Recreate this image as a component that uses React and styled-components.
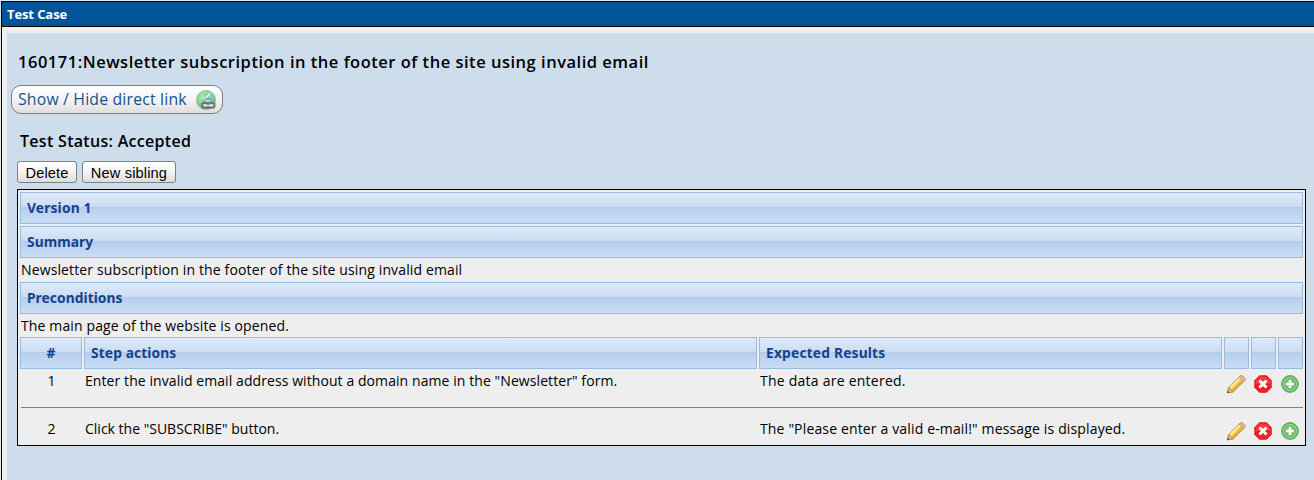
import React from "react";
import styled, { createGlobalStyle } from "styled-components";

const GlobalStyle = createGlobalStyle`
  * { box-sizing: border-box; }
  body {
    margin: 0;
    background: #eeeeee;
    font-family: "Open Sans", "Noto Sans", sans-serif;
    color: #000;
  }
`;

const Page = styled.div`
  height: 480px;
  padding-top: 1px;
  overflow: hidden;
  background: #e2eeee;
  border-left: 1px solid #dde3e3;
`;

const Frame = styled.div`
  height: 479px;
  border-left: 1px solid #000;
  border-top: 1px solid #000;
  background: #eeeeee;
`;

const TitleBar = styled.h1`
  margin: 0;
  height: 25px;
  padding-left: 5px;
  border-bottom: 1px solid #000;
  background: #005498;
  color: #fff;
  font-size: 13px;
  font-weight: 700;
  line-height: 24px;
  letter-spacing: -0.1px;
`;

const Content = styled.main`
  height: 447px;
  margin: 6px 0 0 5px;
  padding: 17px 8px 0 10px;
  background: #cdddec;
`;

const Heading = styled.h2`
  margin: 0 0 0 ${(p) => p.$indent}px;
  font-size: ${(p) => p.$size}px;
  font-weight: 600;
  line-height: 24px;
  letter-spacing: ${(p) => p.$spacing}px;
  white-space: nowrap;
`;

const LinkButton = styled.button`
  display: flex;
  align-items: center;
  justify-content: space-between;
  width: 212px;
  height: 29px;
  margin: 11px 0 15px -6px;
  padding: 0 5px 0 6px;
  border: 1px solid #7e7e7e;
  border-radius: 10px;
  background: linear-gradient(#ffffff, #f4f4f4 50%, #dedede);
  color: #17518c;
  font: 400 15.8px/24px "Open Sans", sans-serif;
  letter-spacing: 0.18px;
  white-space: nowrap;
`;

const LinkLabel = styled.span`
  padding-bottom: 2px;
`;

const Buttons = styled.div`
  display: flex;
  gap: 5px;
  margin: 8px 0 6px;
`;

const Button = styled.button`
  width: ${(p) => p.$width}px;
  height: 22px;
  padding: 1px 0 0;
  border: 1px solid #808080;
  border-radius: 3px;
  background: linear-gradient(#ffffff, #f3f3f3 50%, #dcdcdc);
  color: #000;
  font: 14.6px/18px "Liberation Sans", Arial, sans-serif;
  letter-spacing: 0.15px;
  white-space: nowrap;
`;

const Panel = styled.section`
  height: 257px;
  padding: 2px;
  border: 1px solid #000;
  background: #eeeeee;
`;

const HeaderCell = styled.div`
  height: 32px;
  margin-bottom: ${(p) => p.$gap || 0}px;
  padding: 0 6px;
  border: 1px solid #99bbe0;
  background: linear-gradient(#deeaf8, #cbdcf2 47%, #b4cbe9 48%, #b9d0ef 55%, #c9dcf5);
  color: #15428b;
  font: 700 13.8px/30px "Noto Sans", sans-serif;
  letter-spacing: ${(p) => p.$spacing || 0.05}px;
  text-align: ${(p) => p.$align || "left"};
  white-space: nowrap;
`;

const Paragraph = styled.p`
  margin: 0;
  height: ${(p) => p.$height}px;
  padding-left: 1px;
  font-size: 14px;
  line-height: 24px;
  letter-spacing: 0.13px;
  white-space: nowrap;
`;

const StepHeader = styled.div`
  display: grid;
  grid-template-columns: 62px 673px 463px 25px 25px 25px;
  column-gap: 2px;
`;

const StepRow = styled.div`
  display: grid;
  grid-template-columns: 62px 673px 463px 25px 25px 25px;
  column-gap: 2px;
  height: ${(p) => p.$height}px;
  padding-top: ${(p) => p.$top}px;
`;

const StepText = styled.div`
  padding-left: 1px;
  font-size: 14px;
  line-height: 20px;
  letter-spacing: ${(p) => p.$spacing || 0}px;
  text-align: ${(p) => p.$align || "left"};
  white-space: nowrap;
`;

const IconSlot = styled.div`
  padding: ${(p) => p.$top}px 0 0 2px;
  svg { display: block; }
`;

const Divider = styled.hr`
  height: 1px;
  margin: 0 0 0 1px;
  border: 0;
  background: #848484;
`;

function LinkIcon() {
  return (
    <svg width="22" height="22" viewBox="0 0 22 22">
      <defs>
        <radialGradient id="globe" cx=".45" cy=".4" r=".6">
          <stop offset="0" stopColor="#c4efc0" />
          <stop offset=".6" stopColor="#8fd890" />
          <stop offset="1" stopColor="#5fb566" />
        </radialGradient>
      </defs>
      <circle cx="11" cy="11" r="9.6" fill="url(#globe)" stroke="#8cc492" strokeWidth=".8" />
      <path d="M9 5 14 2.500l4 3 1.500 6-4-1-3 1-4 2-3-1 4-4z" fill="#86c3dc" opacity=".7" />
      <path d="M15 4.500 9 11" stroke="#eefaf2" strokeWidth="1.300" />
      <path d="M9 13c0-2.500 1.500-3.500 4-3.500s4 1 4 3.500" fill="none" stroke="#6f8886" strokeWidth="1" />
      <rect x="6" y="13" width="14.500" height="6.800" rx="2.800" fill="#6e7676" />
      <rect x="8" y="15" width="4" height="2.800" rx="1" fill="#c9d3cd" />
      <rect x="14.500" y="15" width="4" height="2.800" rx="1" fill="#c9d3cd" />
      <path d="M10.500 16.400h5.500" stroke="#eceeee" strokeWidth="1.200" />
    </svg>
  );
}

function PencilIcon() {
  return (
    <svg width="21" height="20" viewBox="-0.5 -0.5 21 20">
      <path d="m.9 18.300 1.200-5L13.400 1.800c1.800-1.700 6.200 2.200 4.900 4.200L6.700 17.400z" fill="#f2c84c" stroke="#b98b35" strokeWidth=".9" />
      <path d="m4.200 13.200 9.500-9.700" stroke="#ffec9a" strokeWidth="2.200" />
      <path d="m6.200 16 10-10" stroke="#dba637" strokeWidth="1.300" />
      <path d="m12.600 2.600 1.200-1.100c2.200-1 5.900 2.400 4.600 4.400l-1.100 1.200z" fill="#e3b89a" stroke="#b98b6c" strokeWidth=".7" />
      <path d="m.9 18.300 1.200-5 4.600 4.100z" fill="#e0bd94" stroke="#a57c4c" strokeWidth=".7" />
      <path d="m.9 18.500.5-2.300 1.700 1.700z" fill="#4d4032" />
    </svg>
  );
}

function DeleteIcon() {
  return (
    <svg width="20" height="20" viewBox="-0.5 -0.5 20 20">
      <path d="M6 1h7l5 5v7l-5 5H6L1 13V6z" fill="#ee2024" stroke="#e01c20" strokeWidth=".6" />
      <path d="M6.200 2.200h6.600l4 4v3.200H2.200V6.200z" fill="#ff5956" opacity=".45" />
      <path d="m6 6 7 7m0-7-7 7" stroke="#fff" strokeWidth="2.900" />
    </svg>
  );
}

function AddIcon() {
  return (
    <svg width="20" height="20" viewBox="-0.5 -0.5 20 20">
      <circle cx="9.500" cy="9.500" r="8.400" fill="#62b45f" stroke="#58a658" strokeWidth=".9" />
      <circle cx="9.500" cy="9.500" r="6.700" fill="#74c06e" stroke="#a5d8a0" strokeWidth=".9" />
      <path d="M9.500 5.500v8m-4-4h8" stroke="#fff" strokeWidth="2.600" />
    </svg>
  );
}

function StepActions({ top }) {
  return (
    <>
      <IconSlot $top={top}><PencilIcon /></IconSlot>
      <IconSlot $top={top}><DeleteIcon /></IconSlot>
      <IconSlot $top={top}><AddIcon /></IconSlot>
    </>
  );
}

export default function App() {
  return (
    <>
      <GlobalStyle />
      <Page>
        <Frame>
          <TitleBar>Test Case</TitleBar>
          <Content>
            <Heading $indent={1} $size={16.5} $spacing={0.51}>
              160171:Newsletter subscription in the footer of the site using invalid email
            </Heading>
            <LinkButton>
              <LinkLabel>Show / Hide direct link</LinkLabel>
              <LinkIcon />
            </LinkButton>
            <Heading $indent={3} $size={16} $spacing={0.3}>Test Status: Accepted</Heading>
            <Buttons>
              <Button $width={60}>Delete</Button>
              <Button $width={94}>New sibling</Button>
            </Buttons>
            <Panel>
              <HeaderCell $gap={2} $spacing={0.15}>Version 1</HeaderCell>
              <HeaderCell>Summary</HeaderCell>
              <Paragraph $height={24}>
                Newsletter subscription in the footer of the site using invalid email
              </Paragraph>
              <HeaderCell>Preconditions</HeaderCell>
              <Paragraph $height={23}>The main page of the website is opened.</Paragraph>
              <StepHeader>
                <HeaderCell $align="center">#</HeaderCell>
                <HeaderCell $spacing={0.1}>Step actions</HeaderCell>
                <HeaderCell $spacing={0.18}>Expected Results</HeaderCell>
                <HeaderCell />
                <HeaderCell />
                <HeaderCell />
              </StepHeader>
              <StepRow $height={38} $top={2}>
                <StepText $align="center">1</StepText>
                <StepText $spacing={0.08}>Enter the invalid email address without a domain name in the "Newsletter" form.</StepText>
                <StepText $spacing={0.24}>The data are entered.</StepText>
                <StepActions top={3} />
              </StepRow>
              <Divider />
              <StepRow $height={35} $top={11}>
                <StepText $align="center">2</StepText>
                <StepText>Click the "SUBSCRIBE" button.</StepText>
                <StepText $spacing={0.15}>The "Please enter a valid e-mail!" message is displayed.</StepText>
                <StepActions top={2} />
              </StepRow>
            </Panel>
          </Content>
        </Frame>
      </Page>
    </>
  );
}
